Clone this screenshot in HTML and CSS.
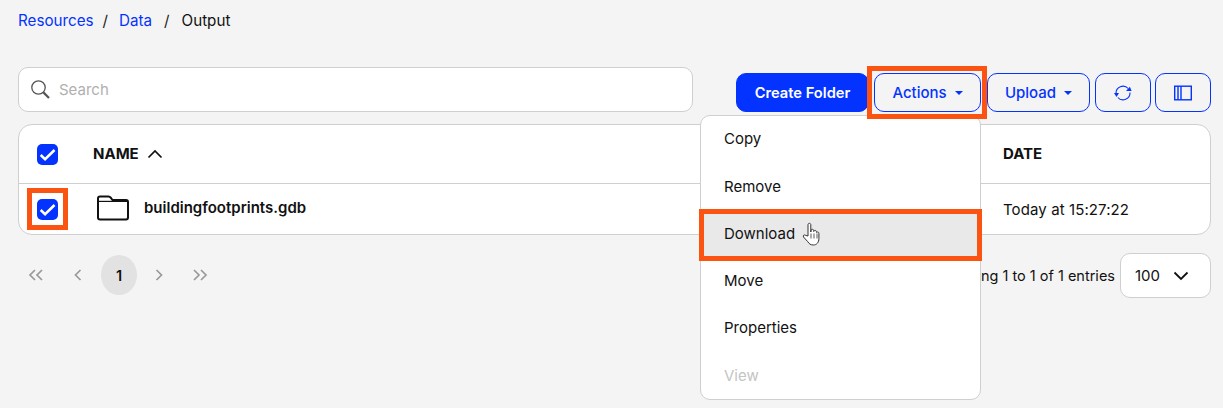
FILE: index.html
```html
<!DOCTYPE html>
<html lang="en">
<head>
<meta charset="utf-8">
<title>Output</title>
<link rel="stylesheet" href="styles.css">
</head>
<body>
<div class="page">
  <nav class="crumbs">
    <a href="#">Resources</a><span class="sep">/</span><a href="#">Data</a><span class="sep">/</span><span>Output</span>
  </nav>
  <div class="toolbar">
    <label class="search">
      <svg class="search-icon" width="22" height="22" viewBox="0 0 22 22" fill="none" stroke="#555" stroke-width="1.3"><circle cx="8.5" cy="8.5" r="6.7"/><path d="M13.4 13.4l5.6 5.6" stroke-width="2.2"/></svg>
      <span class="placeholder">Search</span>
    </label>
    <div class="actions">
      <button class="btn primary">Create Folder</button>
      <div class="menu-wrap">
        <button class="btn outline act">Actions<i class="caret"></i></button>
        <ul class="menu">
          <li>Copy</li>
          <li>Remove</li>
          <li class="hover">Download
            <svg class="hand" width="20" height="26" viewBox="0 0 20 26" fill="#fff" stroke="#333" stroke-width="1"><path d="M6 14V2.8c0-2 2.8-2 2.8 0V10l.3-1.8c.4-1.4 2.4-1.2 2.5.3l.1 1 .4-.6c.7-1 2.2-.5 2.3.7l.1.8.5-.3c.9-.4 1.9.2 1.9 1.3v5c0 4-2.2 6.6-5.6 6.6-2.8 0-4.1-1.1-5.6-3.4L1.5 15c-.9-1.5.9-2.8 2.2-1.6z"/><path d="M9 11.5v5M12 11.5v5M15 11.5v5" fill="none" stroke-width=".8"/></svg>
          </li>
          <li>Move</li>
          <li>Properties</li>
          <li class="disabled">View</li>
        </ul>
        <div class="mark mark-actions"></div>
        <div class="mark mark-download"></div>
      </div>
      <button class="btn outline upl">Upload<i class="caret"></i></button>
      <button class="btn outline icon" aria-label="Refresh">
        <svg width="20" height="20" viewBox="0 0 20 20" fill="none" stroke="#0433ff" stroke-width="1.1"><path d="M3 10.5a7 7 0 0 1 12.2-5"/><path d="M17 9.5a7 7 0 0 1-12.2 5"/><path d="M13 8h5.6l-1.7-4.2z" fill="#0433ff" stroke="none"/><path d="M1 10h5l-2.5 4z" fill="#0433ff" stroke="none"/></svg>
      </button>
      <button class="btn outline icon" aria-label="Columns">
        <svg width="20" height="16" viewBox="0 0 20 16" fill="none" stroke="#0433ff" stroke-width="1.4"><rect x="1.7" y="1.2" width="16.6" height="13.6"/><path d="M5 1.2v13.6M8 1.2v13.6"/></svg>
      </button>
    </div>
  </div>
  <div class="table">
    <div class="row head">
      <div class="cell-check">
        <span class="check"><svg width="21" height="21" viewBox="0 0 20 20" fill="none" stroke="#fff" stroke-width="2.4"><path d="M3.5 10.5l4.2 4 9-8.8"/></svg></span>
      </div>
      <div class="cell-name title">NAME
        <svg class="sort" width="16" height="10" viewBox="0 0 16 10" fill="none" stroke="#111" stroke-width="1.7"><path d="M1.5 8.5L8 2l6.5 6.5"/></svg>
      </div>
      <div class="cell-date title">DATE</div>
    </div>
    <div class="row body">
      <div class="cell-check">
        <span class="check"><svg width="21" height="21" viewBox="0 0 20 20" fill="none" stroke="#fff" stroke-width="2.4"><path d="M3.5 10.5l4.2 4 9-8.8"/></svg></span>
        <div class="mark mark-check"></div>
      </div>
      <div class="cell-name file">
        <svg class="folder" width="34" height="26" viewBox="0 0 34 26" fill="none" stroke="#111" stroke-width="2"><path d="M2 5.5V3.5C2 2.2 3 1.5 4 1.5h8.5c1 0 1.6.4 2.2 1.2L16.5 5H30c1.2 0 2 .8 2 2v15.5c0 1.2-.8 2-2 2H4c-1.2 0-2-.8-2-2z"/><path d="M2 6.4h30" stroke-width="1.2"/></svg>
        <span class="file-name">buildingfootprints.gdb</span>
      </div>
      <div class="cell-date">Today at 15:27:22</div>
    </div>
  </div>
  <div class="footer">
    <div class="pager">
      <svg width="18" height="12" viewBox="0 0 18 12" fill="none" stroke="#999" stroke-width="1.7"><path d="M8 1L3 6l5 5M15 1l-5 5 5 5"/></svg>
      <svg class="prev" width="8" height="12" viewBox="0 0 8 12" fill="none" stroke="#999" stroke-width="1.7"><path d="M6.5 1l-5 5 5 5"/></svg>
      <span class="current">1</span>
      <svg class="next" width="8" height="12" viewBox="0 0 8 12" fill="none" stroke="#999" stroke-width="1.7"><path d="M1.5 1l5 5-5 5"/></svg>
      <svg class="last" width="18" height="12" viewBox="0 0 18 12" fill="none" stroke="#999" stroke-width="1.7"><path d="M3 1l5 5-5 5M10 1l5 5-5 5"/></svg>
    </div>
    <div class="entries">
      <span class="info">Showing 1 to 1 of 1 entries</span>
      <div class="select">100
        <svg width="16" height="10" viewBox="0 0 16 10" fill="none" stroke="#111" stroke-width="1.8"><path d="M1.5 1.5L8 8l6.5-6.5"/></svg>
      </div>
    </div>
  </div>
</div>
</body>
</html>
```
FILE: styles.css
```css
* { box-sizing: border-box; }
html, body { margin: 0; height: 100%; }
body {
  background: #f4f4f4;
  color: #111;
  font-family: "Inter", "Liberation Sans", sans-serif;
  font-size: 15px;
  overflow: hidden;
}
.page { padding: 11px 12px 0 18px; }

.crumbs { display: flex; align-items: center; height: 18px; font-size: 15.2px; }
.crumbs a { color: #0433ff; text-decoration: none; }
.crumbs a:nth-of-type(2) { margin-right: 3px; }
.sep { margin: 0 11px 0 9px; color: #222; }
.sep + a + .sep { margin-right: 12px; }

.toolbar { display: flex; justify-content: space-between; align-items: flex-end; margin-top: 38px; height: 45px; }
.search {
  display: flex; align-items: center; width: 675px; height: 45px;
  padding-left: 11px; background: #fff;
  border: 1px solid #cfcfcf; border-radius: 10px;
}
.search-icon { margin-right: 7px; }
.placeholder { color: #b0b0b0; }

.actions { display: flex; align-items: stretch; height: 39px; }
.btn {
  display: flex; align-items: center; justify-content: center;
  height: 39px; padding: 0; border-radius: 10px;
  font: inherit; font-size: 15px; font-weight: 500;
}
.primary { width: 133px; margin-right: 5px; background: #0433ff; border: 1px solid #0433ff; color: #fff; font-weight: 600; font-size: 14.7px; }
.outline { background: transparent; border: 1px solid #0433ff; color: #0433ff; }
.act { width: 107px; }
.upl { width: 103px; margin-left: 6px; margin-right: 5px; }
.icon { width: 56px; }
.icon + .icon { margin-left: 4px; }
.caret { margin-left: 8px; border: 4px solid transparent; border-top-color: #0433ff; border-bottom: 0; }

.menu-wrap { position: relative; }
.menu {
  position: absolute; z-index: 5; right: 0; top: 42px; width: 281px; height: 285px;
  margin: 0; padding: 0; list-style: none;
  background: #fff; border: 1px solid #cfcfcf; border-radius: 10px;
  display: flex; flex-direction: column; justify-content: flex-start;
}
.menu li { display: flex; align-items: center; height: 47.25px; padding-left: 23px; font-size: 15px; position: relative; flex: none; }
.menu li:first-child { margin-top: -0.75px; }
.menu .hover { background: #e9e9e9; }
.menu .disabled { color: #c4c4c4; }
.hand { margin-left: 7px; margin-top: 4px; }

.mark { position: absolute; z-index: 6; border: 5px solid #fb5412; pointer-events: none; }
.mark-actions { left: -7px; top: -7px; width: 120px; height: 53px; }
.mark-download { left: -175px; top: 136px; width: 283px; height: 52px; }
.mark-check { left: 8px; top: 4px; width: 41px; height: 42px; }

.table {
  margin-top: 12px; width: 1193px; height: 111px;
  background: #fff; border: 1px solid #cfcfcf; border-radius: 14px;
}
.row { display: flex; align-items: center; }
.head { height: 59px; border-bottom: 1px solid #cfcfcf; }
.body { height: 50px; }
.cell-check { position: relative; align-self: stretch; display: flex; align-items: center; width: 74px; padding-left: 18px; }
.check { display: flex; width: 21px; height: 21px; background: #0433ff; border-radius: 5px; align-items: center; justify-content: center; flex: none; }
.cell-name { flex: 1; display: flex; align-items: center; font-weight: 600; }
.title { font-weight: 700; font-size: 15px; padding-bottom: 2px; }
.sort { margin-left: 8px; margin-top: 1px; }
.folder { margin: -2px 14px 0 3px; }
.file-name { margin-top: -3px; }
.cell-date { width: 207px; font-size: 15px; letter-spacing: 0.1px; }
.title.cell-date { font-size: 15px; letter-spacing: 0; }

.footer { display: flex; justify-content: space-between; align-items: center; margin-top: 18px; width: 1193px; height: 45px; }
.pager { display: flex; align-items: center; align-self: flex-start; margin-top: 2px; padding-left: 9px; }
.prev { margin-left: 29px; }
.next { margin-left: 18px; }
.last { margin-left: 28px; }
.current {
  display: flex; align-items: center; justify-content: center;
  width: 36px; height: 40px; margin-left: 19px;
  background: #e2e2e2; border-radius: 50%; font-weight: 600; font-size: 14.5px;
}
.entries { display: flex; align-items: center; }
.info { font-size: 14.5px; margin-right: 5px; }
.select {
  display: flex; align-items: center; gap: 13px; width: 91px; height: 45px; padding-left: 14px;
  background: #fff; border: 1px solid #cfcfcf; border-radius: 10px;
}
```
